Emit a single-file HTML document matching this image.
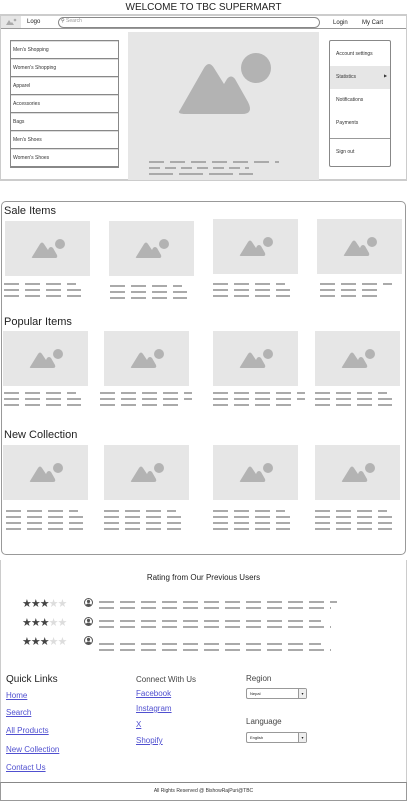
<!DOCTYPE html>
<html><head><meta charset="utf-8"><style>
*{margin:0;padding:0;box-sizing:border-box}
body{width:407px;height:803px;position:relative;background:#fff;font-family:"Liberation Sans",sans-serif;color:#222;overflow:hidden}
.a{position:absolute}
.ph{position:absolute;background:#e6e6e6}
.ph svg{position:absolute;left:50%;top:50%;transform:translate(-50%,-50%)}
.dl{position:absolute;height:2px;background:repeating-linear-gradient(90deg,#aaa 0 15px,transparent 15px 21px)}
.menu{border:1px solid #888}
.menu div{height:18px;border-bottom:1px solid #888;border-top:1px solid #ddd;font-size:5px;line-height:17px;padding-left:2px;color:#333}
.rm div{font-size:5px;color:#333;position:absolute;left:6px}
.sec{font-size:11px;position:absolute;left:4px;color:#222}
.lk{position:absolute;font-size:8px;color:#5050d0;text-decoration:underline}
.st{position:absolute;font-size:11px;letter-spacing:-1px;color:#444}
.st span{color:#ddd}
.av{position:absolute;width:9px;height:9px;border-radius:50%;border:1px solid #555;background:radial-gradient(circle at 50% 35%,#555 0 1.6px,transparent 1.8px),radial-gradient(ellipse 3px 2.5px at 50% 100%,#555 0 98%,transparent 100%)}
.sel{position:absolute;width:61px;height:11px;border:1px solid #999;border-radius:2px;font-size:4px;line-height:9px;padding-left:3px;background:#fff}
.sel b{position:absolute;right:0;top:0;width:8px;height:9px;border-left:1px solid #999;background:#eee;font-size:4px;text-align:center;font-weight:normal}
</style></head><body>
<div class="a" style="left:0;width:407px;top:2px;text-align:center;font-size:10px">WELCOME TO TBC SUPERMART</div>
<div class="a" style="left:0;top:14px;width:407px;height:15px;border-top:2px solid #ccc;border-bottom:1px solid #999;border-left:1px solid #ccc;border-right:1px solid #ccc"></div>
<div class="a" style="left:1px;top:16px;width:20px;height:12px;background:#e6e6e6"></div>
<svg class="a" style="left:5px;top:18px" width="12" height="8" viewBox="0 0 12 8"><path d="M1 7 L4 2 L6 5 L7 4 L9 7Z" fill="#aaa"/><circle cx="10" cy="2" r="1.3" fill="#aaa"/></svg>
<div class="a" style="left:27px;top:19px;font-size:6px">Logo</div>
<div class="a" style="left:58px;top:17px;width:262px;height:11px;border:1px solid #888;border-radius:6px"></div>
<div class="a" style="left:61px;top:18px;font-size:5px;color:#999"><span style="color:#555">&#9906;</span> Search</div>
<div class="a" style="left:333px;top:20px;font-size:6px">Login</div>
<div class="a" style="left:362px;top:20px;font-size:6px">My Cart</div>
<div class="a" style="left:0;top:28px;width:1px;height:152px;background:#ccc"></div>
<div class="a" style="left:406px;top:28px;width:1px;height:152px;background:#ccc"></div>
<div class="a" style="left:0;top:179px;width:407px;height:2px;background:#ccc"></div>
<div class="a menu" style="left:10px;top:40px;width:109px">
<div>Men's Shopping</div><div>Women's Shopping</div><div>Apparel</div><div>Accessories</div><div>Bags</div><div>Men's Shoes</div><div>Women's Shoes</div></div>
<div class="ph" style="left:128px;top:32px;width:191px;height:148px">
<svg style="top:35%" width="96" height="64" viewBox="0 0 96 64"><path d="M4 58 L28 16 Q33 8 38 16 L48 32 L51 27 Q55 22 59 27 L72 50 Q78 62 66 62 L10 62 Q0 62 4 58Z" fill="#b3b3b3"/><circle cx="80" cy="16" r="15" fill="#b3b3b3"/></svg>
<div class="dl" style="left:21px;top:129px;width:130px"></div>
<div class="dl" style="left:21px;top:135px;width:100px;background:repeating-linear-gradient(90deg,#aaa 0 11px,transparent 11px 16px)"></div>
<div class="dl" style="left:21px;top:141px;width:104px;background:repeating-linear-gradient(90deg,#aaa 0 24px,transparent 24px 30px)"></div>
</div>
<div class="a rm" style="left:329px;top:40px;width:62px;height:127px;border:1px solid #888;border-radius:2px">
<div style="top:10px">Account settings</div>
<div style="left:0;top:25px;width:60px;height:23px;background:#e6e6e6"></div>
<div style="top:33px">Statistics</div>
<div style="top:32px;left:54px;font-size:4px">&#9654;</div>
<div style="top:56px">Notifications</div>
<div style="top:79px">Payments</div>
<div style="left:0;top:97px;width:60px;height:1px;background:#999"></div>
<div style="top:108px">Sign out</div>
</div>

<div class="a" style="left:1px;top:201px;width:405px;height:354px;border:1px solid #999;border-radius:5px"></div>
<div class="sec" style="top:205px">Sale Items</div>
<div class="sec" style="top:316px">Popular Items</div>
<div class="sec" style="top:429px">New Collection</div>

<div class="ph" style="left:5px;top:221px;width:85px;height:55px"><svg width="34" height="20" viewBox="0 0 34 20"><path d="M1 18 L9 5 Q11 2 13 5 L17 11 L18 9 Q20 7 22 9 L26 16 Q27 19 24 19 L3 19 Q0 19 1 18Z" fill="#b3b3b3"/><circle cx="29" cy="5" r="5" fill="#b3b3b3"/></svg></div>
<div class="ph" style="left:109px;top:221px;width:85px;height:55px"><svg width="34" height="20" viewBox="0 0 34 20"><path d="M1 18 L9 5 Q11 2 13 5 L17 11 L18 9 Q20 7 22 9 L26 16 Q27 19 24 19 L3 19 Q0 19 1 18Z" fill="#b3b3b3"/><circle cx="29" cy="5" r="5" fill="#b3b3b3"/></svg></div>
<div class="ph" style="left:213px;top:219px;width:85px;height:55px"><svg width="34" height="20" viewBox="0 0 34 20"><path d="M1 18 L9 5 Q11 2 13 5 L17 11 L18 9 Q20 7 22 9 L26 16 Q27 19 24 19 L3 19 Q0 19 1 18Z" fill="#b3b3b3"/><circle cx="29" cy="5" r="5" fill="#b3b3b3"/></svg></div>
<div class="ph" style="left:317px;top:219px;width:85px;height:55px"><svg width="34" height="20" viewBox="0 0 34 20"><path d="M1 18 L9 5 Q11 2 13 5 L17 11 L18 9 Q20 7 22 9 L26 16 Q27 19 24 19 L3 19 Q0 19 1 18Z" fill="#b3b3b3"/><circle cx="29" cy="5" r="5" fill="#b3b3b3"/></svg></div>
<div class="dl" style="left:4px;top:283px;width:72px"></div><div class="dl" style="left:4px;top:289px;width:77px"></div><div class="dl" style="left:4px;top:295px;width:77px"></div>
<div class="dl" style="left:110px;top:285px;width:72px"></div><div class="dl" style="left:110px;top:291px;width:77px"></div><div class="dl" style="left:110px;top:297px;width:77px"></div>
<div class="dl" style="left:213px;top:283px;width:72px"></div><div class="dl" style="left:213px;top:289px;width:77px"></div><div class="dl" style="left:213px;top:295px;width:77px"></div>
<div class="dl" style="left:320px;top:283px;width:72px"></div><div class="dl" style="left:320px;top:289px;width:60px"></div><div class="dl" style="left:320px;top:295px;width:57px"></div>

<div class="ph" style="left:3px;top:331px;width:85px;height:55px"><svg width="34" height="20" viewBox="0 0 34 20"><path d="M1 18 L9 5 Q11 2 13 5 L17 11 L18 9 Q20 7 22 9 L26 16 Q27 19 24 19 L3 19 Q0 19 1 18Z" fill="#b3b3b3"/><circle cx="29" cy="5" r="5" fill="#b3b3b3"/></svg></div>
<div class="ph" style="left:104px;top:331px;width:85px;height:55px"><svg width="34" height="20" viewBox="0 0 34 20"><path d="M1 18 L9 5 Q11 2 13 5 L17 11 L18 9 Q20 7 22 9 L26 16 Q27 19 24 19 L3 19 Q0 19 1 18Z" fill="#b3b3b3"/><circle cx="29" cy="5" r="5" fill="#b3b3b3"/></svg></div>
<div class="ph" style="left:213px;top:331px;width:85px;height:55px"><svg width="34" height="20" viewBox="0 0 34 20"><path d="M1 18 L9 5 Q11 2 13 5 L17 11 L18 9 Q20 7 22 9 L26 16 Q27 19 24 19 L3 19 Q0 19 1 18Z" fill="#b3b3b3"/><circle cx="29" cy="5" r="5" fill="#b3b3b3"/></svg></div>
<div class="ph" style="left:315px;top:331px;width:85px;height:55px"><svg width="34" height="20" viewBox="0 0 34 20"><path d="M1 18 L9 5 Q11 2 13 5 L17 11 L18 9 Q20 7 22 9 L26 16 Q27 19 24 19 L3 19 Q0 19 1 18Z" fill="#b3b3b3"/><circle cx="29" cy="5" r="5" fill="#b3b3b3"/></svg></div>
<div class="dl" style="left:4px;top:392px;width:72px"></div><div class="dl" style="left:4px;top:398px;width:77px"></div><div class="dl" style="left:4px;top:404px;width:77px"></div>
<div class="dl" style="left:100px;top:392px;width:92px"></div><div class="dl" style="left:100px;top:398px;width:92px"></div><div class="dl" style="left:100px;top:404px;width:80px"></div>
<div class="dl" style="left:213px;top:392px;width:92px"></div><div class="dl" style="left:213px;top:398px;width:92px"></div><div class="dl" style="left:213px;top:404px;width:80px"></div>
<div class="dl" style="left:315px;top:392px;width:72px"></div><div class="dl" style="left:315px;top:398px;width:77px"></div><div class="dl" style="left:315px;top:404px;width:77px"></div>

<div class="ph" style="left:3px;top:445px;width:85px;height:55px"><svg width="34" height="20" viewBox="0 0 34 20"><path d="M1 18 L9 5 Q11 2 13 5 L17 11 L18 9 Q20 7 22 9 L26 16 Q27 19 24 19 L3 19 Q0 19 1 18Z" fill="#b3b3b3"/><circle cx="29" cy="5" r="5" fill="#b3b3b3"/></svg></div>
<div class="ph" style="left:104px;top:445px;width:85px;height:55px"><svg width="34" height="20" viewBox="0 0 34 20"><path d="M1 18 L9 5 Q11 2 13 5 L17 11 L18 9 Q20 7 22 9 L26 16 Q27 19 24 19 L3 19 Q0 19 1 18Z" fill="#b3b3b3"/><circle cx="29" cy="5" r="5" fill="#b3b3b3"/></svg></div>
<div class="ph" style="left:213px;top:445px;width:85px;height:55px"><svg width="34" height="20" viewBox="0 0 34 20"><path d="M1 18 L9 5 Q11 2 13 5 L17 11 L18 9 Q20 7 22 9 L26 16 Q27 19 24 19 L3 19 Q0 19 1 18Z" fill="#b3b3b3"/><circle cx="29" cy="5" r="5" fill="#b3b3b3"/></svg></div>
<div class="ph" style="left:315px;top:445px;width:85px;height:55px"><svg width="34" height="20" viewBox="0 0 34 20"><path d="M1 18 L9 5 Q11 2 13 5 L17 11 L18 9 Q20 7 22 9 L26 16 Q27 19 24 19 L3 19 Q0 19 1 18Z" fill="#b3b3b3"/><circle cx="29" cy="5" r="5" fill="#b3b3b3"/></svg></div>
<div class="dl" style="left:6px;top:510px;width:72px"></div><div class="dl" style="left:6px;top:516px;width:77px"></div><div class="dl" style="left:6px;top:522px;width:77px"></div><div class="dl" style="left:6px;top:528px;width:77px"></div>
<div class="dl" style="left:104px;top:510px;width:72px"></div><div class="dl" style="left:104px;top:516px;width:77px"></div><div class="dl" style="left:104px;top:522px;width:77px"></div><div class="dl" style="left:104px;top:528px;width:77px"></div>
<div class="dl" style="left:213px;top:510px;width:72px"></div><div class="dl" style="left:213px;top:516px;width:77px"></div><div class="dl" style="left:213px;top:522px;width:77px"></div><div class="dl" style="left:213px;top:528px;width:77px"></div>
<div class="dl" style="left:315px;top:510px;width:72px"></div><div class="dl" style="left:315px;top:516px;width:77px"></div><div class="dl" style="left:315px;top:522px;width:77px"></div><div class="dl" style="left:315px;top:528px;width:77px"></div>

<div class="a" style="left:0;top:573px;width:407px;text-align:center;font-size:8px">Rating from Our Previous Users</div>
<div class="st" style="left:22px;top:597px">★★★<span>★★</span></div>
<div class="st" style="left:22px;top:616px">★★★<span>★★</span></div>
<div class="st" style="left:22px;top:635px">★★★<span>★★</span></div>
<div class="av" style="left:84px;top:598px"></div>
<div class="av" style="left:84px;top:617px"></div>
<div class="av" style="left:84px;top:636px"></div>
<div class="dl" style="left:99px;top:601px;width:238px"></div><div class="dl" style="left:99px;top:607px;width:232px"></div>
<div class="dl" style="left:99px;top:620px;width:222px"></div><div class="dl" style="left:99px;top:626px;width:232px"></div>
<div class="dl" style="left:99px;top:643px;width:222px"></div><div class="dl" style="left:99px;top:649px;width:232px"></div>

<div class="a" style="left:6px;top:674px;font-size:10px">Quick Links</div>
<div class="lk" style="left:6px;top:691px">Home</div>
<div class="lk" style="left:6px;top:708px">Search</div>
<div class="lk" style="left:6px;top:726px">All Products</div>
<div class="lk" style="left:6px;top:745px">New Collection</div>
<div class="lk" style="left:6px;top:763px">Contact Us</div>
<div class="a" style="left:136px;top:675px;font-size:8px;color:#444">Connect With Us</div>
<div class="lk" style="left:136px;top:689px">Facebook</div>
<div class="lk" style="left:136px;top:704px">Instagram</div>
<div class="lk" style="left:136px;top:720px">X</div>
<div class="lk" style="left:136px;top:736px">Shopify</div>
<div class="a" style="left:246px;top:674px;font-size:8px;color:#444">Region</div>
<div class="sel" style="left:246px;top:688px">Nepal<b>▾</b></div>
<div class="a" style="left:246px;top:717px;font-size:8px;color:#444">Language</div>
<div class="sel" style="left:246px;top:732px">English<b>▾</b></div>

<div class="a" style="left:0;top:782px;width:407px;height:19px;border:1px solid #999;border-top:1px solid #888;text-align:center;font-size:5px;line-height:17px;color:#333">All Rights Reserved @ BishowRajPuri@TBC</div>
<div class="a" style="left:0;top:560px;width:1px;height:222px;background:#ccc"></div>
<div class="a" style="left:406px;top:560px;width:1px;height:222px;background:#ccc"></div>
</body></html>
